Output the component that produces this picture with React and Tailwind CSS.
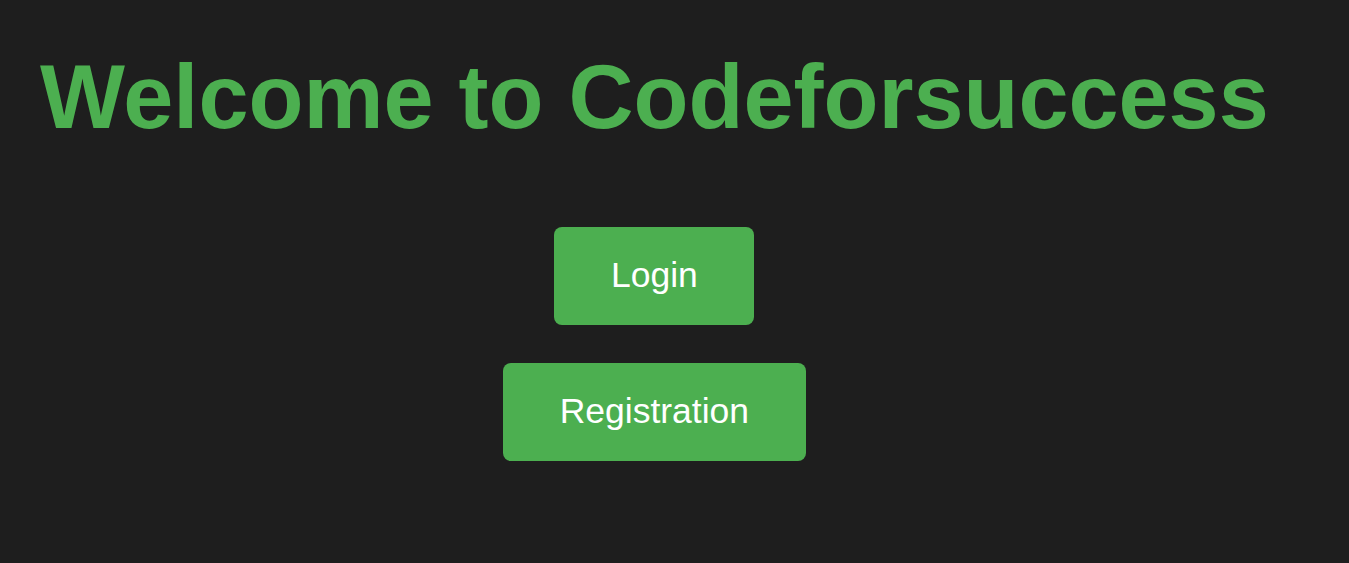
export default function App() {
  return (
    <div className="min-h-screen bg-[#1e1e1e] font-['Liberation_Sans',Arial,sans-serif]">
      <div className="inline-flex flex-col items-center pl-[40px] pt-[46px]">
        <h1 className="text-[90px] font-bold leading-[1.15] text-[#4caf50]">Welcome to Codeforsuccess</h1>
        <div className="mt-[77px] flex flex-col items-center gap-[38px]">
          <button className="h-[98px] rounded-[8px] bg-[#4caf50] px-[56.5px] text-[35.5px] text-white">Login</button>
          <button className="h-[98px] rounded-[8px] bg-[#4caf50] px-[56.5px] text-[35.5px] text-white">Registration</button>
        </div>
      </div>
    </div>
  )
}
